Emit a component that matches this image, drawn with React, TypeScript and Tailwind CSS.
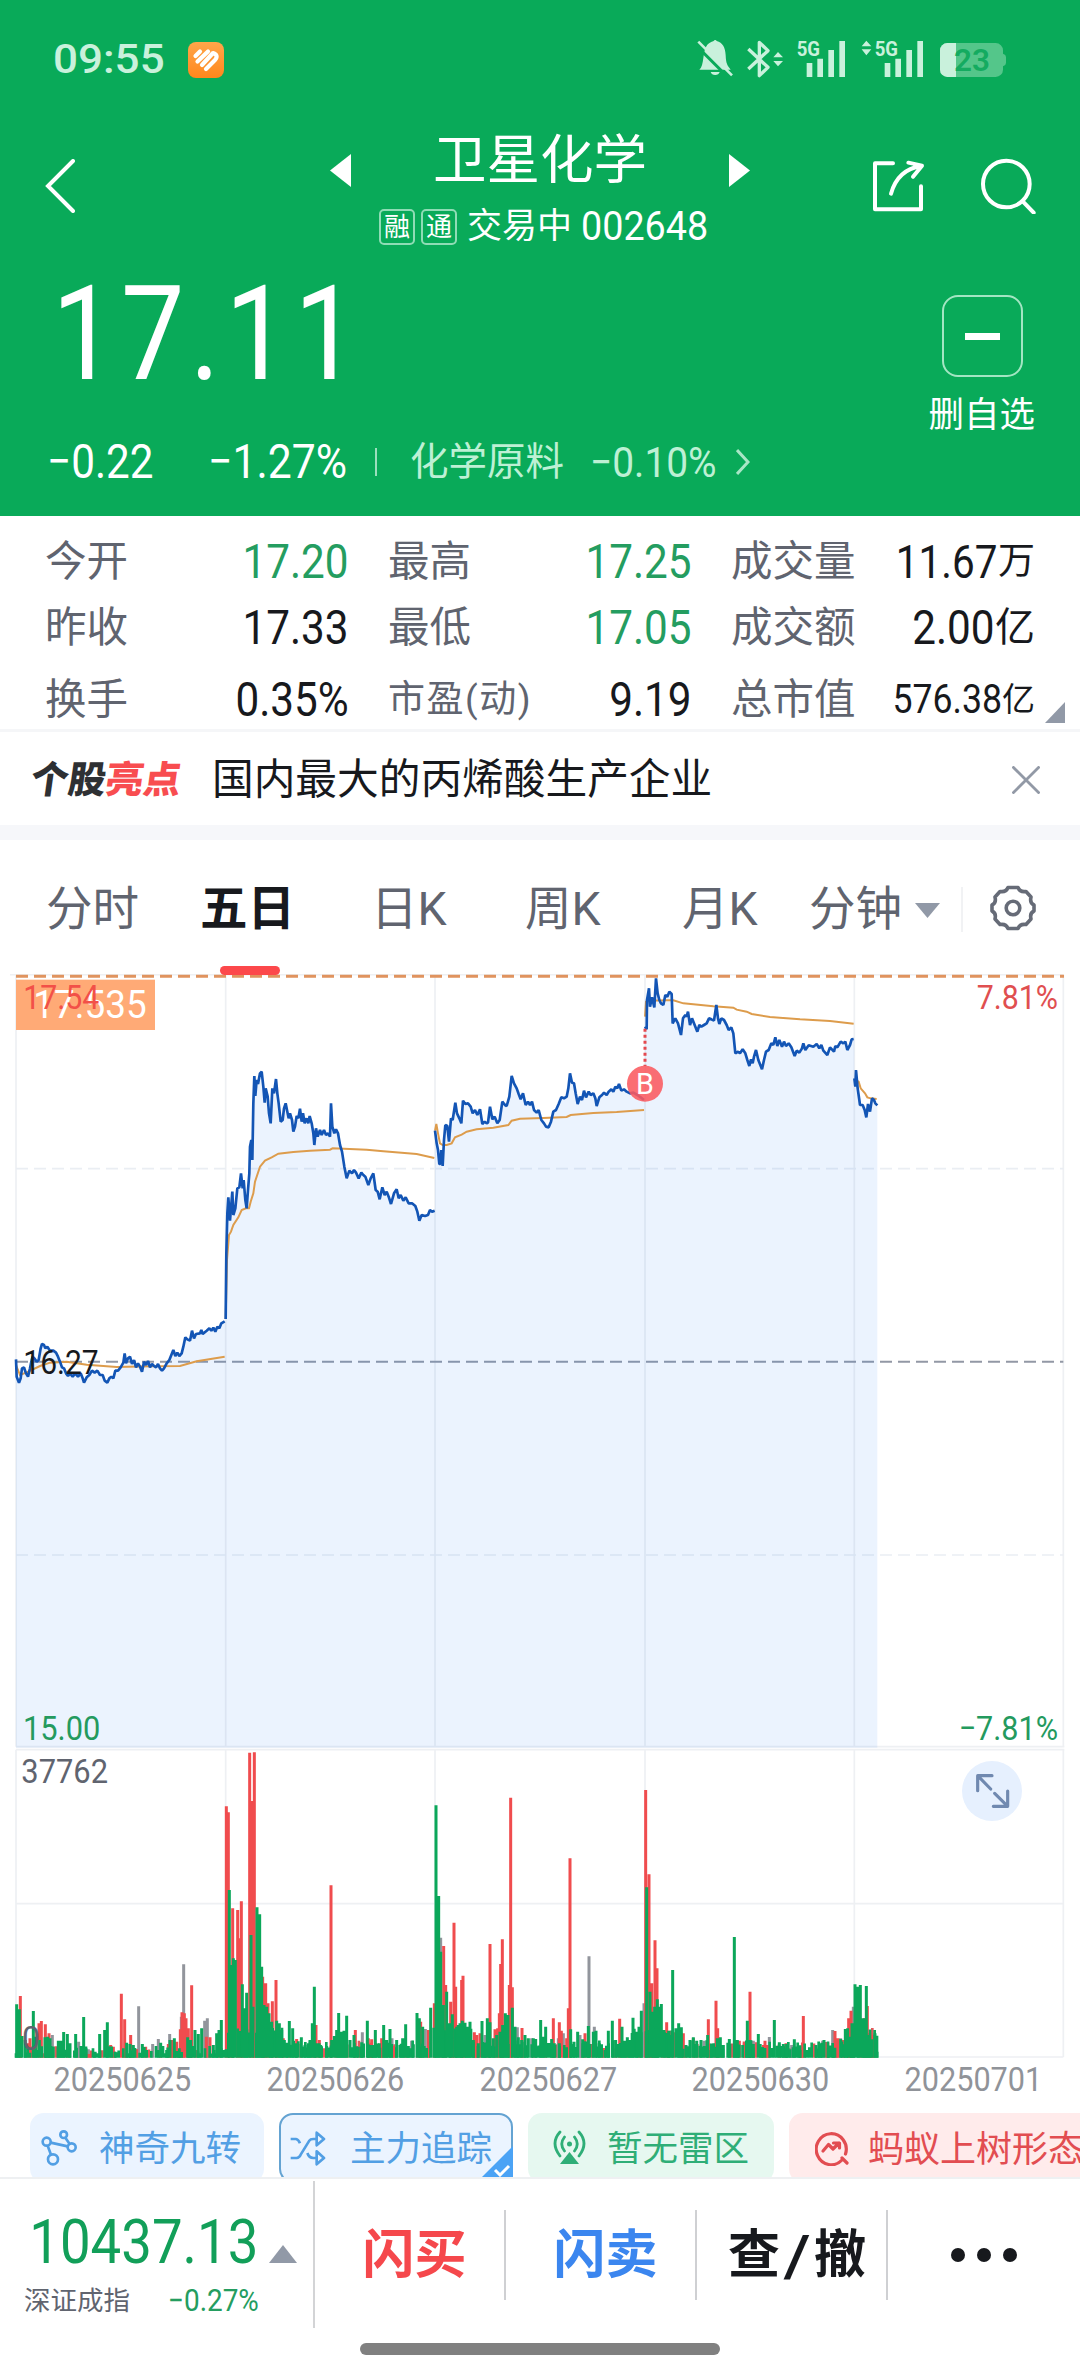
import type { ReactNode } from "react"

const FONT = "font-['Roboto','Noto_Sans_CJK_SC',sans-serif]"

type Pair = [number, number]

const stats = [
    [
        { label: "今开", value: "17.20", green: true },
        { label: "最高", value: "17.25", green: true },
        { label: "成交量", value: "11.67", unit: "万" },
    ],
    [
        { label: "昨收", value: "17.33" },
        { label: "最低", value: "17.05", green: true },
        { label: "成交额", value: "2.00", unit: "亿", big: true },
    ],
    [
        { label: "换手", value: "0.35%" },
        { label: "市盈(动)", value: "9.19", smallLabel: true },
        { label: "总市值", value: "576.38", unit: "亿", small: true },
    ],
]

const dates = ["20250625", "20250626", "20250627", "20250630", "20250701"]

// chart units: 3 per pixel
const gridX = [48, 677, 1305, 1935, 2563, 3190]

const prices: { dx: number; pts: string }[] = [
    {
        dx: 0,
        pts: "48,1198 50,1250 57,1268 62,1255 66,1225 72,1222 78,1240 84,1250 90,1225 95,1200 98,1190 103,1195 110,1205 116,1200 122,1165 126,1152 132,1155 136,1165 142,1160 150,1172 160,1172 168,1178 174,1190 180,1205 186,1222 192,1225 198,1240 204,1248 210,1240 218,1250 226,1240 234,1250 242,1240 248,1255 252,1268 260,1252 268,1245 276,1232 284,1238 292,1232 300,1245 308,1245 314,1262 322,1268 328,1255 334,1250 340,1255 346,1232 354,1232 362,1222 370,1208 374,1180 378,1210 384,1195 390,1190 396,1212 402,1200 408,1222 414,1210 420,1220 426,1235 432,1205 438,1215 444,1203 450,1222 456,1212 462,1218 468,1222 474,1212 480,1225 486,1232 492,1225 500,1210 508,1200 514,1185 520,1170 526,1188 532,1178 538,1188 545,1180 550,1160 556,1132 562,1138 570,1142 576,1112 582,1135 588,1122 600,1120 604,1110 608,1122 620,1112 628,1105 634,1112 640,1103 646,1115 652,1100 658,1105 664,1090 674,1084",
    },
    {
        dx: 0,
        pts: "677,1077 679,880 682,760 685,712 690,782 697,695 700,765 706,745 712,685 718,682 723,640 728,685 731,660 736,720 740,745 744,690 748,640 750,560 754,540 757,600 760,430 763,348 766,408 770,360 774,372 780,340 785,335 790,380 794,428 797,385 803,410 807,460 812,490 817,385 822,400 828,357 832,400 836,430 842,485 848,480 852,445 857,430 862,455 866,475 870,460 876,480 880,515 885,500 890,468 895,475 900,446 905,485 909,460 914,490 920,475 925,490 929,468 935,490 940,520 943,555 948,505 953,530 960,510 965,525 972,510 978,525 984,520 990,530 993,430 997,500 1003,520 1008,508 1014,520 1020,555 1026,575 1033,620 1040,655 1048,632 1056,640 1062,630 1068,638 1076,655 1084,638 1090,645 1096,650 1105,675 1112,655 1120,640 1127,690 1133,695 1139,718 1147,682 1154,705 1160,695 1166,710 1173,732 1182,700 1190,688 1196,715 1202,705 1210,722 1217,712 1226,730 1236,730 1246,738 1252,755 1258,782 1265,765 1275,768 1284,765 1290,750 1296,755 1304,752",
    },
    {
        dx: 1200,
        pts: "105,512 110,550 114,570 118,612 121,612 124,570 128,618 132,540 136,495 142,498 147,545 153,475 158,480 166,428 171,460 178,475 184,490 189,422 196,432 204,430 212,440 218,460 225,450 232,465 240,448 247,492 254,485 260,490 264,488 270,440 277,478 284,470 292,490 299,480 307,425 315,435 320,438 328,410 335,348 342,370 350,385 356,402 362,418 369,400 377,435 384,425 390,435 396,425 402,450 410,458 416,450 424,480 432,490 438,500 446,502 453,485 460,455 468,450 476,432 484,412 492,415 500,410 505,385 510,340 516,368 522,370 527,400 533,432 540,410 546,420 552,392 558,412 566,395 572,405 580,400 586,415 590,438 598,412 606,405 612,398 620,405 626,395 634,388 640,395 646,380 652,385 657,372 664,392 672,388 680,395 690,400 700,398 712,405 722,412 732,420",
    },
    {
        dx: 1200,
        pts: "735,200 740,208 741,120 747,85 750,140 756,112 763,142 768,55 773,100 778,120 783,130 790,135 796,105 802,110 808,95 815,102 818,190 826,175 834,190 843,225 849,175 856,165 860,170 864,155 870,195 876,175 884,195 892,215 898,195 904,200 912,195 920,190 927,175 934,178 942,182 949,135 954,175 958,192 964,175 972,180 980,195 986,210 994,202 1000,220 1006,280 1014,275 1020,280 1028,268 1036,280 1042,300 1048,318 1053,298 1058,310 1062,290 1068,270 1075,300 1086,328 1092,300 1098,275 1106,270 1114,250 1120,255 1126,232 1132,258 1138,240 1146,260 1152,245 1158,258 1166,250 1174,262 1184,288 1190,272 1198,278 1206,265 1210,250 1216,270 1226,256 1240,260 1250,252 1258,265 1264,255 1270,272 1282,285 1290,262 1302,275 1306,258 1312,262 1322,245 1330,250 1336,245 1342,270 1350,255 1355,238 1361,237",
    },
    {
        dx: 1200,
        pts: "1363,355 1366,380 1368,330 1373,385 1378,420 1380,435 1388,435 1394,450 1399,472 1404,432 1410,455 1416,415 1422,420 1426,430 1432,436",
    },
]

const averages: { dx: number; pts: string }[] = [
    { dx: 0, pts: "48,1215 60,1245 80,1237 120,1218 150,1208 200,1205 260,1214 350,1221 450,1219 540,1218 590,1204 674,1190" },
    { dx: 0, pts: "677,1077 681,900 687,825 693,815 700,795 715,772 725,750 738,745 747,745 752,725 760,700 765,665 780,620 795,602 815,592 835,581 880,576 930,572 990,569 998,565 1100,569 1150,574 1250,582 1303,594" },
    { dx: 1200, pts: "105,512 109,492 114,520 120,550 128,555 140,555 155,550 165,532 185,524 200,515 230,508 280,503 325,495 335,482 360,476 430,474 500,471 512,465 580,459 650,456 732,450" },
    { dx: 1200, pts: "735,170 738,125 745,122 800,121 820,121 850,130 940,139 1000,143 1010,149 1040,155 1055,162 1110,171 1200,178 1290,183 1361,191" },
    { dx: 1200, pts: "1366,360 1376,365 1382,385 1395,400 1402,412 1412,415 1430,417" },
]

const grayA: Pair[] = [[157, 1035], [236, 1055], [265, 1078], [416, 949], [458, 1062], [475, 1047], [509, 1032], [551, 823], [544, 980], [614, 992], [622, 985], [1087, 1027], [1176, 1045], [1235, 1052], [1276, 1017], [1322, 743]]
const grayB: Pair[] = [[165, 1035], [262, 1012], [305, 1045], [385, 1045], [400, 1030], [450, 1035], [477, 799], [493, 1010], [642, 940], [822, 1052], [850, 1070], [970, 1052], [1018, 1041], [1085, 1065], [1106, 1068], [1178, 1052], [1208, 1020], [1232, 1045], [1270, 950]]

const redA: Pair[] = [[61, 918], [85, 1060], [90, 1045], [117, 1000], [124, 993], [136, 1003], [147, 1030], [262, 1092], [270, 1092], [332, 1065], [340, 1070], [364, 911], [374, 988], [392, 1035], [410, 1078], [437, 1070], [505, 1062], [515, 1050], [530, 1055], [541, 1018], [546, 967], [553, 970], [558, 985], [565, 1015], [575, 886], [619, 1040], [630, 1042], [679, 349], [685, 367], [698, 655], [713, 660], [718, 745], [724, 634], [749, 188], [757, 333], [763, 187], [788, 860], [797, 880], [804, 940], [817, 934], [828, 870], [850, 1045], [890, 1047], [948, 1005], [958, 1050], [993, 586], [1066, 1020], [1105, 1045], [1115, 1048], [1145, 1045], [1180, 1068], [1262, 995], [1285, 1020], [1303, 940], [1331, 768], [1337, 885]]
const redB: Pair[] = [[62, 935], [72, 698], [77, 890], [95, 870], [99, 857], [133, 1027], [140, 1035], [150, 1030], [180, 762], [195, 1018], [203, 1015], [208, 970], [212, 822], [217, 748], [238, 885], [242, 323], [247, 892], [276, 1014], [370, 985], [388, 997], [394, 1022], [410, 1045], [415, 955], [420, 505], [465, 1030], [517, 1075], [569, 986], [647, 300], [657, 553], [665, 880], [675, 751], [681, 835], [710, 997], [718, 1022], [760, 1030], [790, 1045], [835, 988], [858, 932], [863, 1015], [928, 1052], [943, 1060], [960, 905], [1000, 1065], [1005, 1052], [1014, 1065], [1068, 1060], [1115, 1078], [1120, 978], [1193, 1058], [1215, 1023], [1224, 1045], [1240, 1050], [1256, 985], [1263, 962], [1303, 985], [1312, 948], [1320, 1030], [1328, 1035]]

const greenA: Pair[] = [[50, 943], [58, 958], [66, 1038], [76, 1050], [100, 963], [108, 1040], [118, 1050], [135, 1042], [143, 1040], [150, 1045], [158, 1070], [175, 1052], [183, 1052], [191, 1026], [202, 1032], [210, 1060], [227, 1032], [243, 1068], [251, 981], [258, 1075], [283, 1090], [299, 1032], [314, 1020], [322, 997], [345, 1085], [380, 1058], [390, 1062], [400, 1065], [427, 1062], [482, 1058], [500, 1080], [510, 1050], [523, 1045], [537, 1085], [563, 1042], [572, 1050], [585, 1020], [595, 1032], [605, 1015], [640, 1065], [650, 1030], [657, 1020], [664, 990], [688, 600], [693, 825], [700, 805], [706, 810], [727, 883], [733, 955], [740, 908], [753, 735], [759, 950], [771, 652], [779, 673], [785, 830], [792, 945], [800, 950], [807, 970], [815, 995], [830, 992], [838, 1000], [845, 1020], [853, 1050], [862, 1058], [868, 993], [878, 1015], [888, 1060], [904, 1042], [915, 1065], [925, 1060], [930, 1050], [937, 1000], [943, 890], [950, 1060], [962, 1065], [980, 1068], [995, 1050], [1003, 1038], [1010, 1020], [1016, 969], [1024, 1025], [1032, 1022], [1040, 977], [1050, 1050], [1062, 1035], [1075, 1070], [1085, 1057], [1102, 992], [1110, 1065], [1118, 1065], [1126, 1020], [1138, 1060], [1151, 1005], [1160, 1050], [1170, 1017], [1190, 1050], [1200, 1065], [1208, 1045], [1217, 1003], [1225, 1068], [1240, 1063], [1251, 969], [1258, 985], [1268, 1010], [1292, 953], [1308, 346], [1316, 618], [1322, 785], [1330, 945], [1340, 905], [1348, 1000], [1357, 973], [1375, 1005]]
const greenB: Pair[] = [[80, 1010], [90, 1000], [97, 992], [105, 998], [113, 1010], [120, 995], [130, 1050], [145, 1060], [156, 993], [165, 1060], [172, 985], [180, 997], [190, 1045], [200, 1035], [210, 1025], [218, 1005], [226, 970], [234, 975], [247, 953], [255, 1010], [265, 1042], [275, 1050], [285, 1035], [295, 1045], [310, 1045], [317, 1047], [332, 990], [340, 1040], [347, 1010], [365, 1047], [373, 1060], [388, 1060], [405, 1080], [422, 1018], [432, 1055], [443, 1025], [458, 1048], [475, 1008], [490, 1025], [498, 1022], [508, 1060], [525, 1080], [535, 1022], [547, 992], [557, 1050], [576, 1010], [584, 1052], [592, 1042], [600, 1050], [609, 983], [620, 1030], [627, 1010], [634, 962], [650, 592], [660, 905], [667, 965], [674, 950], [682, 928], [688, 950], [694, 942], [702, 1020], [716, 1022], [728, 840], [738, 1015], [746, 1000], [754, 1012], [768, 1065], [780, 1050], [790, 1042], [800, 1052], [813, 1050], [833, 1035], [843, 1080], [862, 1045], [871, 1042], [880, 1065], [898, 1047], [913, 741], [922, 1050], [938, 1065], [952, 992], [960, 1050], [970, 1062], [985, 1032], [995, 1075], [1033, 990], [1048, 1057], [1060, 1062], [1070, 1062], [1080, 1078], [1093, 1048], [1110, 1080], [1130, 1080], [1158, 1065], [1168, 1070], [1175, 1058], [1182, 1050], [1195, 1075], [1210, 1085], [1232, 1047], [1246, 1017], [1253, 1015], [1260, 1040], [1266, 1000], [1275, 883], [1282, 890], [1291, 885], [1300, 985], [1309, 888], [1317, 1040], [1325, 1048], [1335, 1030], [1341, 1085]]

const BASE = 3293

const bars = (list: Pair[], dx: number) =>
    list.map(([x, top]) => `M${x + dx - 4.5} ${BASE}V${top + 2190}h9V${BASE}z`).join("")

// low volume minutes that fill the gaps between the named bars
const filler = (keep: (i: number) => boolean) => {
    let d = ""
    let seed = 7
    for (let i = 0; 48 + i * 7 < 2632; i++) {
        seed = (seed * 1103515245 + 12345) % 2147483648
        const x = 48 + i * 7
        const busy = (x > 680 && x < 860) || (x > 1300 && x < 1420) || (x > 1890 && x < 2050) || x > 2560
        const h = (x < 680 ? 10 : 26) + (seed % 1000) / 38 + (busy ? 38 : 0)
        if (keep(i)) d += `M${x - 4} ${BASE}v${-h}h8v${h}z`
    }
    return d
}

const areaPoints = (i: number) => {
    const { dx, pts } = prices[i]
    const list = pts.split(" ")
    const [lastX, lastY] = list[list.length - 1].split(",")
    const end = i < 4 ? gridX[i + 1] - dx : lastX
    return `${list[0].split(",")[0]},2363 ${pts} ${end},${lastY} ${end},2363`
}

const Chart = () => {
    return (
        <svg width="1080" height="1086" viewBox="0 42 3240 3258" className={`block ${FONT}`}>
            <g stroke="#eef0f3" strokeWidth="5" fill="none">
                <path d="M30 44H3190M48 2360H3193M48 2369H3193M48 2831H3190M48 3291H3190" />
                {gridX.map((x) => (
                    <path key={x} d={`M${x} 44V2360M${x} 2369V3291`} />
                ))}
                <path d="M48 626H3190M48 1785H3190" strokeDasharray="36 18" stroke="#eaeef3" />
            </g>
            <path d="M48 1205H3190" stroke="#9298a5" strokeWidth="6" strokeDasharray="36 18" />

            {prices.map((p, i) => (
                <polygon key={i} points={areaPoints(i)} transform={`translate(${p.dx} 0)`} fill="#247bf8" fillOpacity="0.09" />
            ))}
            {averages.map((p, i) => (
                <polyline key={i} points={p.pts} transform={`translate(${p.dx} 0)`} fill="none" stroke="#dd9c4c" strokeWidth="6" />
            ))}
            {prices.map((p, i) => (
                <polyline key={i} points={p.pts} transform={`translate(${p.dx} 0)`} fill="none" stroke="#1355b5" strokeWidth="8" strokeLinejoin="bevel" />
            ))}

            <path d="M48 49H3192" stroke="#e0935e" strokeWidth="9" strokeDasharray="36 18" />
            <rect x="48" y="59" width="417" height="151" fill="#ffaa76" />
            <text x="100" y="174" fontSize="119" fill="#fff" textLength="340" lengthAdjust="spacingAndGlyphs">17.535</text>
            <text x="70" y="148" fontSize="102" fill="#f25048" textLength="228" lengthAdjust="spacingAndGlyphs">17.54</text>
            <text x="70" y="1242" fontSize="102" fill="#17191d" textLength="226" lengthAdjust="spacingAndGlyphs">16.27</text>
            <text x="69" y="2340" fontSize="102" fill="#249a5e" textLength="232" lengthAdjust="spacingAndGlyphs">15.00</text>
            <text x="2930" y="148" fontSize="102" fill="#e04f50" textLength="244" lengthAdjust="spacingAndGlyphs">7.81%</text>
            <text x="2876" y="2340" fontSize="102" fill="#249a5e" textLength="298" lengthAdjust="spacingAndGlyphs">−7.81%</text>
            <text x="64" y="2468" fontSize="102" fill="#60646f" textLength="260" lengthAdjust="spacingAndGlyphs">37762</text>

            <path d="M1935 206V318" stroke="#e4494f" strokeWidth="9" strokeDasharray="9 9" />
            <circle cx="1935" cy="371" r="54" fill="#fb5a60" fillOpacity="0.88" />
            <text x="1935" y="402" fontSize="86" fill="#fff" textAnchor="middle">B</text>

            <path d={filler((i) => i % 5 === 2)} fill="#e4575a" />
            <path d={bars(grayA, 0) + bars(grayB, 1290)} fill="#92959c" />
            <path d={bars(redA, 0) + bars(redB, 1290)} fill="#f04c4e" />
            <path d={filler((i) => i % 5 !== 2 && i % 7 !== 3)} fill="#0ba75a" />
            <path d={bars(greenA, 0) + bars(greenB, 1290)} fill="#0ba75a" />
            <text x="66" y="3270" fontSize="102" fill="#60646f" textLength="54" lengthAdjust="spacingAndGlyphs">0</text>

            <circle cx="2976" cy="2493" r="90" fill="#e6f0fe" />
            <path d="M2933 2492V2447H2976M2935 2449L2972 2487M3023 2493V2539H2980M3021 2537L2984 2500" stroke="#7089b0" strokeWidth="9.5" fill="none" strokeLinecap="round" strokeLinejoin="round" />
        </svg>
    )
}

const StatusIcons = () => {
    return (
        <svg width="320" height="48" viewBox="0 0 960 144" fill="#c9f1dc" className="font-['Roboto']">
            {/* muted bell */}
            <path d="M28 105C44 92 36 50 52 30C62 21 66 22 71 19a5 5 0 0 1 9 0C98 24 106 38 107 62C108 88 112 92 122 105zM62 112h27a14 12 0 0 1-27 0z" transform="translate(0 14)" />
            <path d="M20 42L122 144" stroke="#09aa59" strokeWidth="9" transform="translate(-3 3)" />
            <path d="M25 35L126 136" stroke="#c9f1dc" strokeWidth="8" />
            {/* bluetooth */}
            <path d="M175 57L234 112L208 137V37L234 62L175 117" fill="none" stroke="#c9f1dc" strokeWidth="10" strokeLinejoin="round" />
            <path d="M250 82L264 66L279 82zM250 93L264 109L279 93z" />
            <text x="320" y="77" fontSize="62" fontWeight="700" textLength="70" lengthAdjust="spacingAndGlyphs">5G</text>
            <path d="M350 99h17v42h-17zM382 86h17v55h-17zM415 60h17v81h-17zM448 33h17v108h-17z" />
            <path d="M515 49L529 32L544 49zM515 58L529 76L544 58z" />
            <text x="554" y="77" fontSize="62" fontWeight="700" textLength="70" lengthAdjust="spacingAndGlyphs">5G</text>
            <path d="M584 99h17v42h-17zM616 86h17v55h-17zM649 60h17v81h-17zM682 33h17v108h-17z" />
            {/* battery */}
            <path d="M772 39H917a22 22 0 0 1 22 22V119a22 22 0 0 1-22 22H772a22 22 0 0 1-22-22V61a22 22 0 0 1 22-22zM939 71q9 3 9 10v18q0 7-9 10z" fill="#54c68a" />
            <path d="M798 39V141H772a22 22 0 0 1-22-22V61a22 22 0 0 1 22-22z" />
            <text x="792" y="124" fontSize="92" fontWeight="600" fill="#14ab60" textLength="108" lengthAdjust="spacingAndGlyphs">23</text>
        </svg>
    )
}

const Header = () => {
    return (
        <header className="flex h-[516px] flex-col bg-[#09aa59] text-white">
            <div className="flex h-[118px] items-center pt-[2px] pl-[53px]">
                <span className="w-[135px] origin-left scale-x-[1.1] text-[40px] font-medium text-[#c9f1dc]">09:55</span>
                <svg width="36" height="36" viewBox="0 0 36 36">
                    <defs>
                        <linearGradient id="app" x1="0" y1="0" x2="0" y2="1">
                            <stop offset="0" stopColor="#ffa64a" />
                            <stop offset="1" stopColor="#ff871c" />
                        </linearGradient>
                    </defs>
                    <rect width="36" height="36" rx="8" fill="url(#app)" />
                    <path d="M7.500 14L12 9.500M9.500 19.500L20 9.500M14 23L25 11Q31 13 27 18L18 27" fill="none" stroke="#fff" strokeWidth="4.200" strokeLinecap="round" strokeLinejoin="round" />
                </svg>
                <div className="-mt-[12px] ml-[466px]">
                    <StatusIcons />
                </div>
            </div>

            <div className="flex h-[142px] items-start pl-[45px]">
                <svg width="30" height="54" viewBox="0 0 30 54" className="mt-[41px]">
                    <path d="M28 2L3 27L28 52" fill="none" stroke="#fff" strokeWidth="4" strokeLinecap="round" />
                </svg>
                <svg width="21" height="33" viewBox="0 0 21 33" className="ml-[255px] mt-[36px]">
                    <path d="M21 0V33L0 16.500z" fill="#fff" />
                </svg>
                <div className="flex w-[378px] flex-col items-center pt-[5px]">
                    <h1 className="h-[76px] text-[53.500px] leading-[76px]">卫星化学</h1>
                    <div className="mt-[9px] flex h-[37px] items-center gap-[6px] pl-[6px]">
                        <Badge>融</Badge>
                        <Badge>通</Badge>
                        <span className="ml-[4px] text-[35px] leading-[37px]">交易中</span>
                        <span className="ml-[3px] w-[126px] origin-left scale-x-[0.92] text-[41px] leading-[35px]">002648</span>
                    </div>
                </div>
                <svg width="21" height="33" viewBox="0 0 21 33" className="mt-[36px]">
                    <path d="M0 0V33L21 16.500z" fill="#fff" />
                </svg>
                <svg width="52" height="54" viewBox="0 0 156 162" className="ml-[123px] mt-[41px]" fill="none" stroke="#fff" strokeWidth="12" strokeLinecap="round" strokeLinejoin="round">
                    <path d="M60 13H6V151H144V82M54 104Q74 32 144 21M106 11L147 20L120 53" />
                </svg>
                <svg width="56" height="56" viewBox="0 0 168 168" className="ml-[56px] mt-[40px]" fill="none" stroke="#fff" strokeWidth="12" strokeLinecap="round">
                    <circle cx="76" cy="78" r="70" />
                    <path d="M126 131L158 164" />
                </svg>
            </div>

            <div className="flex flex-1 justify-between">
                <div>
                    <div className="h-[146px] pl-[52px]">
                        <span className="inline-block origin-left scale-x-[0.855] text-[132px] leading-[149px] tracking-[6.5px]">17.11</span>
                    </div>
                    <div className="flex h-[110px] items-center pt-[2px] pl-[47px] text-[48px]">
                        <span className="w-[161px] origin-left scale-x-[0.88] whitespace-nowrap">−0.22</span>
                        <span className="w-[167px] origin-left scale-x-[0.89] whitespace-nowrap">−1.27%</span>
                        <span className="h-[28px] w-[2px] bg-[#9bdfbd]"></span>
                        <span className="ml-[33px] w-[180px] text-[38.500px] text-[#bdf0d4]">化学原料</span>
                        <span className="w-[146px] origin-left scale-x-[0.905] text-[43px] whitespace-nowrap text-[#bdf0d4]">−0.10%</span>
                        <svg width="14" height="26" viewBox="0 0 14 26" fill="none" stroke="#a8e6c6" strokeWidth="3">
                            <path d="M1 1L12 13L1 25" />
                        </svg>
                    </div>
                </div>
                <div className="mr-[45px] flex flex-col items-center pt-[35px]">
                    <div className="ml-[1px] flex h-[82px] w-[81px] items-center justify-center rounded-[16px] border-2 border-[#a3e6c3]">
                        <span className="h-[7px] w-[35px] bg-white"></span>
                    </div>
                    <span className="mt-[12px] text-[35.500px] leading-[52px]">删自选</span>
                </div>
            </div>
        </header>
    )
}

const Badge = ({ children }: { children: ReactNode }) => (
    <span className="flex size-[36px] items-center justify-center rounded-[5px] border-2 border-[#8fdcb5] text-[26px] leading-none">{children}</span>
)

const Stats = () => {
    return (
        <div className="flex h-[213px] flex-col pt-[10px] pr-[45px] pl-[45px]">
            {stats.map((row, i) => (
                <div key={i} className={`grid grid-cols-3 gap-[39px] ${i === 0 ? "h-[66px]" : i === 1 ? "h-[64px]" : "h-[71px] pt-[8px]"}`}>
                    {row.map((s) => (
                        <div key={s.label} className="flex items-center justify-between whitespace-nowrap">
                            <span className={`text-[#60646f] ${"smallLabel" in s ? "text-[37px] tracking-[1.5px]" : "text-[41.500px]"}`}>{s.label}</span>
                            <span className={`flex items-center justify-end ${"small" in s ? "text-[41px]" : "unit" in s && !("big" in s) ? "text-[46px]" : "text-[48px]"} ${"green" in s ? "text-[#249d60]" : "text-[#17191d]"}`}>
                                <span className={`-ml-10 origin-right ${"small" in s ? "scale-x-[0.87]" : "scale-x-[0.88]"}`}>{s.value}</span>
                                {"unit" in s && <span className={"small" in s ? "text-[33px]" : "big" in s ? "text-[40px]" : "text-[37px]"}>{s.unit}</span>}
                            </span>
                        </div>
                    ))}
                </div>
            ))}
        </div>
    )
}

const Tabs = () => {
    return (
        <nav className="flex h-[134px] items-center pt-[5px] pl-[46px] text-[46.500px] whitespace-nowrap text-[#60646f]">
            <span className="w-[154px]">分时</span>
            <span className="relative flex h-full w-[171px] items-center text-[47.500px] font-bold text-[#17191d]">
                五日
                <span className="absolute bottom-[-1px] left-[20px] h-[9px] w-[60px] rounded-full bg-[#fc484b]"></span>
            </span>
            <span className="w-[154px]">日K</span>
            <span className="w-[157px]">周K</span>
            <span className="w-[127px]">月K</span>
            <span className="w-[106px]">分钟</span>
            <svg width="25" height="15" viewBox="0 0 25 15" className="mt-[2px]">
                <path d="M0 0H25L12.500 15z" fill="#9199a7" />
            </svg>
            <span className="ml-[21px] h-[45px] w-[2px] bg-[#f1f2f4]"></span>
            <svg width="46" height="46" viewBox="0 0 46 46" className="-mt-[4px] ml-[27px]" fill="none" stroke="#666b77" strokeWidth="3.600" strokeLinejoin="round">
                <path d="M18 2.500H28Q30 7.500 36 6.500L41 12Q39.500 18 44 20V26Q39.500 28 41 34L36 39.500Q30 38.500 28 43.500H18Q16 38.500 10 39.500L5 34Q6.500 28 2 26V20Q6.500 18 5 12L10 6.500Q16 7.500 18 2.500z" />
                <circle cx="23" cy="23" r="6.800" />
            </svg>
        </nav>
    )
}

const Chips = () => {
    return (
        <div className="flex h-[64px] items-start overflow-hidden pl-[30px] text-[35.500px] whitespace-nowrap">
            <div className="flex h-[70px] w-[234px] shrink-0 items-center rounded-[14px] bg-[#ebf4ff] pl-[11px] text-[#529fe4]">
                <svg width="36" height="36" viewBox="0 0 108 108" fill="none" stroke="currentColor" strokeWidth="8">
                    <circle cx="17" cy="35" r="12" />
                    <circle cx="68" cy="14" r="10" />
                    <circle cx="92" cy="52" r="12" />
                    <circle cx="36" cy="88" r="15" />
                    <path d="M29 38L80 49M73 23L86 42M20 47L30 74" />
                </svg>
                <span className="mt-[3px] ml-[22px]">神奇九转</span>
            </div>
            <div className="relative ml-[15px] flex h-[70px] w-[234px] shrink-0 items-center rounded-[14px] border-2 border-[#64a3d2] bg-[#ebf4ff] pl-[9px] text-[#529fe4]">
                <svg width="36" height="36" viewBox="0 0 108 108" fill="none" stroke="currentColor" strokeWidth="8" strokeLinejoin="round">
                    <path d="M2 27H18Q25 28 30 40M2 84H20Q28 83 32 74L58 32Q61 27 70 27H80M80 8L102 27L80 46zM52 69Q57 84 70 84H80M80 64L102 84L80 103z" />
                </svg>
                <span className="mt-[3px] ml-[24px]">主力追踪</span>
                <svg width="31" height="31" viewBox="0 0 31 31" className="absolute right-[-2px] bottom-[4px]">
                    <path d="M31 0V31H0z" fill="#4ba3f5" />
                    <path d="M13 24L18 29L27 20" fill="none" stroke="#fff" strokeWidth="3" />
                </svg>
            </div>
            <div className="ml-[15px] flex h-[70px] w-[246px] shrink-0 items-center rounded-[14px] bg-[#e6f8f0] pl-[25px] text-[#2fae77]">
                <svg width="33" height="36" viewBox="0 0 33 36" fill="none" stroke="currentColor" strokeWidth="2.800" strokeLinecap="round">
                    <path d="M7 2Q-3 13 7 26M26 2Q36 13 26 26M11.500 7Q6 14 11.500 21M21.500 7Q27 14 21.500 21" />
                    <circle cx="16.500" cy="14" r="2.500" fill="currentColor" stroke="none" />
                    <path d="M16.500 22L26 34H7z" fill="currentColor" stroke="none" />
                </svg>
                <span className="mt-[3px] ml-[21px]">暂无雷区</span>
            </div>
            <div className="ml-[15px] flex h-[70px] w-[400px] shrink-0 items-center rounded-l-[14px] bg-[#ffebeb] pl-[26px] text-[#e24d51]">
                <svg width="35" height="36" viewBox="0 0 35 36" fill="none" stroke="currentColor" strokeWidth="3.200" strokeLinecap="round" strokeLinejoin="round">
                    <path d="M27 30A15 15.500 0 1 1 30.500 24M27 28L32 33" />
                    <path d="M8 21L13.500 14.500L18 19L24 13M18.500 13H24.500V18" />
                </svg>
                <span className="mt-[3px] ml-[18px] text-[36px]">蚂蚁上树形态</span>
            </div>
        </div>
    )
}

const BottomBar = () => {
    return (
        <footer className="flex h-[199px] flex-col border-t-2 border-[#eef0f2]">
            <div className="flex h-[151px] items-center text-[52px] font-bold">
                <div className="flex h-[147px] w-[315px] flex-col border-r-2 border-[#d3d4d6] pl-[24px] font-normal">
                    <div className="mt-[25px] flex h-[70px] items-center">
                        <span className="w-[245px] origin-left scale-x-[0.88] pl-[6px] text-[62px] text-[#129f59]">10437.13</span>
                        <svg width="28" height="18" viewBox="0 0 28 18" className="mt-[26px] shrink-0">
                            <path d="M14 0L28 18H0z" fill="#9199a7" />
                        </svg>
                    </div>
                    <div className="mt-[3px] flex h-[44px] items-center">
                        <span className="w-[144px] text-[26.500px] text-[#60646f]">深证成指</span>
                        <span className="origin-left scale-x-[0.9] text-[31px] leading-[42px] whitespace-nowrap text-[#249d60]">−0.27%</span>
                    </div>
                </div>
                <div className="flex h-[90px] w-[191px] items-center justify-center border-r-2 border-[#cfd0d3] pt-[3px] pl-[10px] text-[#f5484c]">闪买</div>
                <div className="flex h-[90px] w-[191px] items-center justify-center border-r-2 border-[#cfd0d3] pt-[3px] pl-[10px] text-[#3b86ef]">闪卖</div>
                <div className="flex h-[90px] w-[191px] items-center justify-center border-r-2 border-[#cfd0d3] pt-[3px] pl-[11px] text-[#17191d]">
                    查<span className="w-[34px] origin-center scale-x-[1.2] text-center text-[58px] font-medium">/</span>撤
                </div>
                <div className="flex flex-1 items-center justify-center gap-[12px]">
                    <span className="size-[14px] rounded-full bg-[#17191d]"></span>
                    <span className="size-[14px] rounded-full bg-[#17191d]"></span>
                    <span className="size-[14px] rounded-full bg-[#17191d]"></span>
                </div>
            </div>
            <div className="mx-auto mt-[13px] h-[12px] w-[360px] rounded-full bg-[#808080]"></div>
        </footer>
    )
}

const App = () => {
    return (
        <div className={`h-[2376px] w-[1080px] overflow-hidden bg-white ${FONT}`}>
            <Header />
            <div className="relative">
                <Stats />
                <svg width="20" height="21" viewBox="0 0 20 21" className="absolute right-[15px] bottom-[6px]">
                    <path d="M20 0V21H0z" fill="#9199a7" />
                </svg>
            </div>
            <div className="flex h-[96px] items-center border-t-3 border-[#f5f6f8] pt-[3px] pl-[31px]">
                <span className="w-[181px] origin-left skew-x-[-8deg] text-[37.500px] font-black text-[#2e3033]">
                    个股<span className="text-[#f84d50]">亮点</span>
                </span>
                <span className="text-[41.700px] text-[#17191d]">国内最大的丙烯酸生产企业</span>
                <svg width="28" height="28" viewBox="0 0 28 28" className="ml-[300px]" stroke="#9299a6" strokeWidth="2.800">
                    <path d="M0.500 0.500L27.500 27.500M27.500 0.500L0.500 27.500" />
                </svg>
            </div>
            <div className="h-[15px] bg-[#f6f7fa]"></div>
            <Tabs />
            <Chart />
            <div className="grid h-[53px] grid-cols-5 pl-[16px] text-[34px] leading-[39px] text-[#909399]">
                {dates.map((d) => (
                    <span key={d} className="scale-x-[0.9] text-center">{d}</span>
                ))}
            </div>
            <Chips />
            <BottomBar />
        </div>
    )
}

export default App
